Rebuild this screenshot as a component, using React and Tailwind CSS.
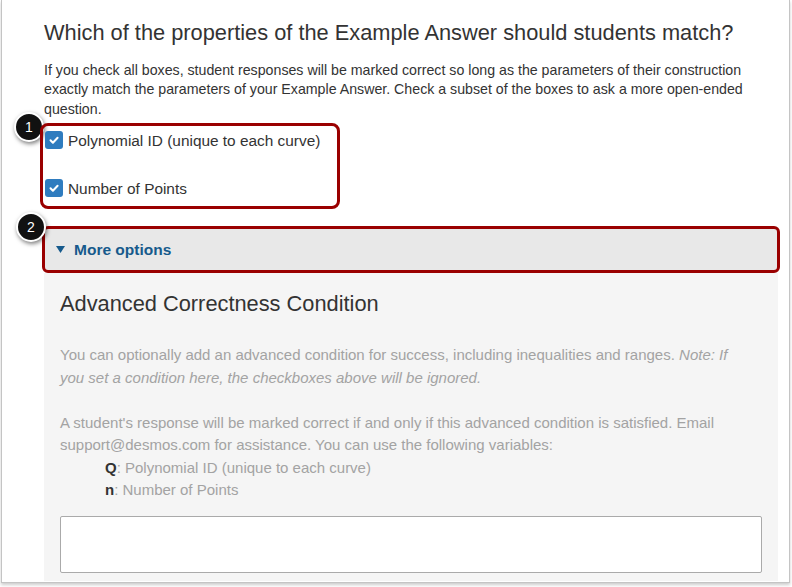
import React from 'react';

const font = { fontFamily: '"Liberation Sans", Arial, sans-serif' };

const Badge = ({ n, className }) => (
  <div
    className={`absolute w-[30px] h-[30px] rounded-full bg-[#111] border-2 border-white shadow-[1px_2px_4px_rgba(0,0,0,0.5)] flex items-center justify-center text-white text-[14px] ${className}`}
  >
    {n}
  </div>
);

const Checkbox = () => (
  <span className="w-[18px] h-[18px] rounded-[3px] bg-[#2f7cbf] flex items-center justify-center shrink-0">
    <svg width="12" height="12" viewBox="0 0 12 12" fill="none">
      <path d="M2.5 6.3l2.4 2.4 4.7-5" stroke="white" strokeWidth="2" strokeLinecap="round" strokeLinejoin="round" />
    </svg>
  </span>
);

const App = () => {
  return (
    <div className="w-[792px] h-[587px] bg-white overflow-hidden" style={font}>
      <div className="relative ml-[1px] w-[789px] h-[583px] bg-white border-x border-b border-[#c4c4c4] shadow-[0_2px_3px_rgba(0,0,0,0.2)] pl-[42px] pr-[12px] pt-[20px] overflow-hidden">
        <Badge n="1" className="left-[12px] top-[112px]" />
        <Badge n="2" className="left-[14px] top-[212px]" />

        <h2 className="text-[21.8px] leading-[26px] text-[#333]">
          Which of the properties of the Example Answer should students match?
        </h2>
        <p className="mt-[15px] text-[14.2px] leading-[19.4px] text-[#333] w-[705px]">
          If you check all boxes, student responses will be marked correct so long as the parameters of their construction
          exactly match the parameters of your Example Answer. Check a subset of the boxes to ask a more open-ended
          question.
        </p>

        <div className="relative mt-[9px] flex flex-col gap-[24px] pl-[1px]">
          <div className="absolute left-[-4px] top-[-5px] w-[300px] h-[86px] rounded-[8px] border-[3px] border-[#9a0000]" />
          <label className="flex items-center gap-[5px] h-[24px] text-[15.4px] text-[#333]">
            <Checkbox />
            Polynomial ID (unique to each curve)
          </label>
          <label className="flex items-center gap-[5px] h-[24px] text-[15.4px] text-[#333]">
            <Checkbox />
            Number of Points
          </label>
        </div>

        <div className="mt-[26px] -mx-[2px] w-[738px]">
          <div className="h-[47px] rounded-[6px] border-[3px] border-[#9a0000] bg-[#e8e8e8] flex items-center pl-[11px] gap-[9px]">
            <svg width="9" height="7" viewBox="0 0 9 7">
              <path d="M0 0h9L4.5 7z" fill="#165a8c" />
            </svg>
            <span className="text-[15.5px] font-bold text-[#165a8c]">More options</span>
          </div>
          <div className="mx-[2px] bg-[#f5f5f5] px-[16px] pt-[18px] pb-[8px]">
            <h3 className="text-[21.8px] leading-[26px] text-[#333]">Advanced Correctness Condition</h3>
            <div className="mt-[27px] text-[15px] leading-[22.5px] text-[#a3a3a3]">
              <p className="w-[680px]">
                You can optionally add an advanced condition for success, including inequalities and ranges.{' '}
                <em>Note: If you set a condition here, the checkboxes above will be ignored.</em>
              </p>
              <p className="mt-[22.5px]">
                A student's response will be marked correct if and only if this advanced condition is satisfied. Email
                support@desmos.com for assistance. You can use the following variables:
              </p>
              <div className="pl-[45px]">
                <div>
                  <b className="text-[#333]">Q</b>: Polynomial ID (unique to each curve)
                </div>
                <div>
                  <b className="text-[#333]">n</b>: Number of Points
                </div>
              </div>
            </div>
            <div className="mt-[14px] h-[57px] bg-white border border-[#aaa] rounded-[2px]" />
          </div>
        </div>
      </div>
    </div>
  );
};

export default App;
